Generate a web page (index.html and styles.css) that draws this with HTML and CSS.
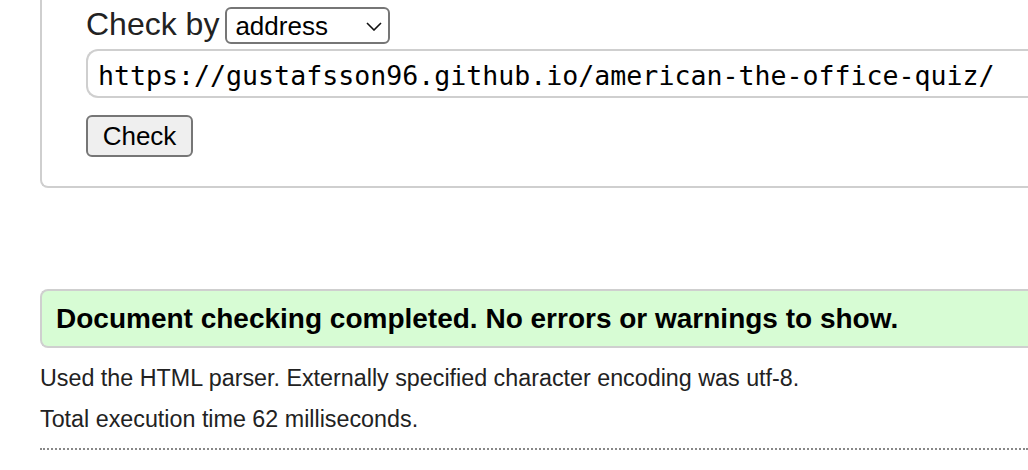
FILE: index.html
```html
<!DOCTYPE html>
<html lang="en">
<head>
<meta charset="utf-8">
<title>Nu Html Checker</title>
<link rel="stylesheet" href="styles.css">
</head>
<body>
<div class="page">
  <form class="checker">
    <div class="by-row">
      <span class="by-label">Check by</span>
      <span class="select-wrap">
        <select class="by-select"><option>address</option></select>
        <svg class="chevron" width="16" height="9" viewBox="0 0 16 9"><path d="M1 1 L8 8 L15 1" fill="none" stroke="#111" stroke-width="1.6"/></svg>
      </span>
    </div>
    <input class="url" type="text" value="https://gustafsson96.github.io/american-the-office-quiz/">
    <button class="check-btn" type="button">Check</button>
  </form>
  <div class="success">Document checking completed. No errors or warnings to show.</div>
  <p class="details first">Used the HTML parser. Externally specified character encoding was utf-8.</p>
  <p class="details">Total execution time 62 milliseconds.</p>
  <hr class="dotted">
</div>
</body>
</html>
```
FILE: styles.css
```css
html, body {
  margin: 0;
  padding: 0;
  background: #fff;
  overflow: hidden;
}
body {
  width: 1028px;
  height: 470px;
  font-family: "Liberation Sans", Arial, sans-serif;
  color: #222;
}
.page {
  padding-left: 40px;
}
.checker {
  width: 988px;
  margin-top: -12px;
  border: 2px solid #cfcfcf;
  border-right: 0;
  border-radius: 8px 0 0 8px;
  padding: 17px 0 29px 44px;
  box-sizing: border-box;
  display: flex;
  flex-direction: column;
  align-items: flex-start;
}
.by-row {
  display: flex;
  align-items: center;
  height: 37px;
}
.by-label {
  font-size: 32px;
  line-height: 37px;
  color: #222;
  margin-right: 6px;
  position: relative;
  top: -1px;
}
.select-wrap {
  position: relative;
  display: inline-block;
}
.by-select {
  appearance: none;
  -webkit-appearance: none;
  width: 165px;
  height: 37px;
  border: 2px solid #767676;
  border-radius: 6px;
  background: #fff;
  font-family: "Liberation Sans", Arial, sans-serif;
  font-size: 26px;
  color: #000;
  padding: 0 0 0 8px;
  box-sizing: border-box;
  margin: 0;
}
.chevron {
  position: absolute;
  left: 141px;
  top: 15px;
}
.url {
  margin-top: 5px;
  width: 942px;
  height: 49px;
  border: 2px solid #cfcfcf;
  border-right: 0;
  border-radius: 12px 0 0 12px;
  box-sizing: border-box;
  padding: 3px 0 0 10px;
  font-family: "DejaVu Sans Mono", "Liberation Mono", monospace;
  font-size: 26.6px;
  color: #000;
  background: #fff;
}
.check-btn {
  margin-top: 17px;
  width: 107px;
  height: 42px;
  border: 2px solid #767676;
  border-radius: 6px;
  background: #efefef;
  font-family: "Liberation Sans", Arial, sans-serif;
  font-size: 26px;
  color: #000;
  padding: 0;
  box-sizing: border-box;
}
.success {
  margin-top: 101px;
  width: 988px;
  height: 59px;
  box-sizing: border-box;
  border: 2px solid #cfcfcf;
  border-right: 0;
  border-radius: 8px 0 0 8px;
  background: #d7fcd4;
  padding-left: 14px;
  font-size: 28px;
  font-weight: bold;
  color: #000;
  line-height: 56px;
  white-space: nowrap;
}
.details {
  margin: 13px 0 0 0;
  font-size: 23.3px;
  line-height: 28px;
  color: #222;
}
.details.first {
  margin-top: 16px;
}
.dotted {
  margin: 15px 0 0 0;
  border: 0;
  border-top: 2px dotted #888;
  height: 0;
  width: 988px;
}
```
